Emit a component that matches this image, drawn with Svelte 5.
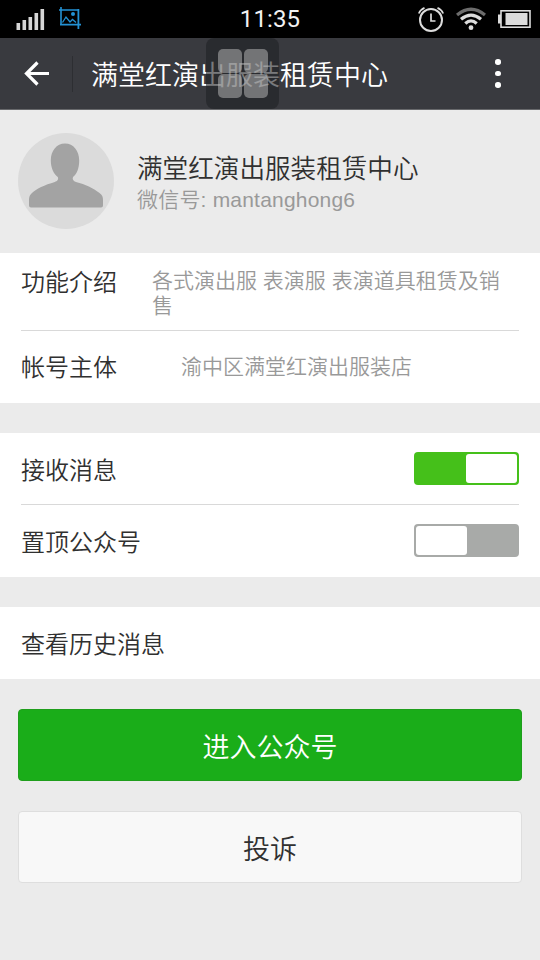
<script lang="ts">
    let receive = $state(true);
    let pinned = $state(false);

    const account = {
        name: '满堂红演出服装租赁中心',
        wechatId: 'mantanghong6',
        intro: '各式演出服 表演服 表演道具租赁及销售',
        owner: '渝中区满堂红演出服装店',
    };

    const BARS = [7, 10, 13, 17, 21];
</script>

<div class="screen">
    <div class="status">
        <div class="notices">
            <svg class="signal" width="30" height="24" viewBox="0 0 30 24">
                {#each BARS as h, i}
                    <rect x={0.5 + i * 6} y={22 - h} width="3.6" height={h} fill="#d6d6d6" />
                {/each}
            </svg>
            <svg class="shot" width="24" height="24" viewBox="0 0 24 24" fill="none" stroke="#2391d3" stroke-width="1.6">
                <path d="M3 1v18M1 4h20" />
                <path d="M2 18.700h21M20.400 3v20" stroke-width="1.800" />
                <path d="M4.500 16.500l3.500-5.500 4 5 2.500-2.500 3.500 3" stroke-width="1.300" />
                <circle cx="15" cy="8" r="2" fill="#2391d3" stroke="none" />
            </svg>
        </div>
        <span class="clock">11:35</span>
        <div class="tray">
            <svg width="26" height="26" viewBox="0 0 26 26" fill="none" stroke="#dcdcdc" stroke-width="2">
                <circle cx="13" cy="14" r="11" />
                <path d="M13 7.500V15h4.500" stroke-width="1.700" />
                <path d="M.8 7.500Q2.500 3.500 6.500 1.900M25.200 7.500Q23.500 3.500 19.500 1.900" stroke-width="1.700" />
            </svg>
            <svg width="30" height="24" viewBox="0 0 30 24" fill="none" stroke="#dcdcdc" stroke-width="3.300">
                <path d="M1 8Q15-3.500 29 8" stroke="#6c6c6c" />
                <path d="M5 12.200Q15 4 25 12.200" />
                <path d="M9.300 16.400Q15 11.400 20.700 16.400" />
                <circle cx="15" cy="20.700" r="2.400" fill="#dcdcdc" stroke="none" />
            </svg>
            <svg width="33" height="18" viewBox="0 0 33 18">
                <rect x="0" y="4.500" width="3" height="9" fill="#dcdcdc" />
                <rect x="3" y=".8" width="29" height="16.400" fill="none" stroke="#dcdcdc" stroke-width="1.600" />
                <rect x="7.500" y="3" width="22" height="12" fill="#dcdcdc" />
            </svg>
        </div>
    </div>

    <header class="bar">
        <button class="back" aria-label="返回">
            <svg width="26" height="26" viewBox="0 0 26 26" fill="none" stroke="#fff" stroke-width="3.200">
                <path d="M25 12.500H3M13.500 1.500l-11 11 11 11" />
            </svg>
        </button>
        <h1>{account.name}</h1>
        <button class="more" aria-label="更多"><i></i><i></i><i></i></button>
        <div class="float">
            <b></b><b></b><b></b><b></b>
        </div>
    </header>

    <section class="profile">
        <svg class="avatar" width="96" height="96" viewBox="0 0 96 96">
            <circle cx="48" cy="48" r="48" fill="#dbdbdb" />
            <path d="M47 10.500c-8.500 0-14.200 7.500-14.200 17 0 7.500 3 13.500 7 16.500 1 2.500-.5 4-3 5-10 3-18.500 6.500-23.800 12-2.200 2.200-2 5-2 8v3.500q0 2 2 2h70q2 0 2-2V67c0-3.500-.8-4.800-3.500-7-6.500-5-14-8.700-23.500-11-2.500-1-4-2.500-3-5 4-3 6.200-9 6.200-16.500 0-9.500-5.700-17-14.200-17z" fill="#a3a3a3" />
        </svg>
        <div>
            <div class="name">{account.name}</div>
            <div class="wxid">微信号: {account.wechatId}</div>
        </div>
    </section>

    <section class="group">
        <div class="row intro">
            <span class="label">功能介绍</span>
            <span class="value">{account.intro}</span>
        </div>
        <div class="row owner">
            <span class="label">帐号主体</span>
            <span class="value">{account.owner}</span>
        </div>
    </section>

    <section class="group settings">
        <div class="row">
            <span class="label">接收消息</span>
            <button class="switch" class:on={receive} aria-label="接收消息" onclick={() => (receive = !receive)}><i></i></button>
        </div>
        <div class="row">
            <span class="label">置顶公众号</span>
            <button class="switch" class:on={pinned} aria-label="置顶公众号" onclick={() => (pinned = !pinned)}><i></i></button>
        </div>
    </section>

    <section class="group">
        <div class="row">
            <span class="label">查看历史消息</span>
        </div>
    </section>

    <div class="actions">
        <button class="btn primary">进入公众号</button>
        <button class="btn">投诉</button>
    </div>
</div>

<style>
    :global(body) {
        margin: 0;
        background: #ebebeb;
    }

    .screen {
        width: 540px;
        height: 960px;
        overflow: hidden;
        background: #ebebeb;
        color: #303030;
        font-family: 'Liberation Sans', 'Noto Sans CJK SC', sans-serif;
        font-weight: 350;
    }

    .screen * {
        box-sizing: border-box;
    }

    button {
        padding: 0;
        border: 0;
        background: none;
        font: inherit;
        color: inherit;
    }

    svg {
        display: block;
        flex: none;
    }

    .status {
        display: grid;
        grid-template-columns: 1fr auto 1fr;
        align-items: center;
        height: 38px;
        background: #000;
    }

    .notices {
        display: flex;
        gap: 12px;
        padding-left: 16px;
    }

    .signal {
        margin-top: 1px;
    }

    .shot {
        margin-top: -1px;
    }

    .clock {
        color: #f2f2f2;
        font: 400 24px/38px Roboto, sans-serif;
        letter-spacing: 0.1px;
    }

    .tray {
        display: flex;
        align-items: center;
        justify-content: flex-end;
        gap: 12px;
        padding-right: 9px;
    }

    .bar {
        position: relative;
        display: flex;
        align-items: center;
        height: 72px;
        border-bottom: 1px solid #68696c;
        background: #393a3f;
        color: #fff;
    }

    .back {
        display: flex;
        align-items: center;
        width: 73px;
        height: 36px;
        padding-left: 24px;
        border-right: 1px solid #2d2e32;
    }

    h1 {
        flex: 1;
        margin: 0 0 0 18px;
        padding-top: 4px;
        font-size: 27px;
        font-weight: 350;
        line-height: 40px;
    }

    .more {
        display: flex;
        flex-direction: column;
        align-items: center;
        gap: 6px;
        width: 84px;
    }

    .more i {
        width: 5.5px;
        height: 5.5px;
        border-radius: 50%;
        background: #fff;
    }

    .float {
        position: absolute;
        top: 0;
        left: 206px;
        display: grid;
        grid-template-columns: 24px 24px;
        grid-template-rows: 24px 24px;
        place-content: center;
        gap: 1px 2px;
        width: 73px;
        height: 71px;
        border-radius: 8px;
        background: rgba(32, 33, 36, 0.6);
    }

    .float b {
        border-radius: 5px;
        background: rgba(190, 190, 190, 0.5);
    }

    .profile {
        display: flex;
        align-items: center;
        gap: 23px;
        height: 143px;
        padding-left: 18px;
    }

    .avatar {
        margin-bottom: 1px;
    }

    .name {
        margin-top: 3px;
        font-size: 25.6px;
        line-height: 34px;
    }

    .wxid {
        color: #999;
        font-size: 21px;
        line-height: 28px;
    }

    .wxid {
        letter-spacing: 0.2px;
    }

    .group {
        margin-bottom: 30px;
        background: #fff;
    }

    .row {
        display: flex;
        align-items: center;
        height: 72px;
        margin: 0 21px;
    }

    .row + .row {
        border-top: 1px solid #d9d9d9;
    }

    .label {
        padding-top: 3px;
        font-size: 24px;
        line-height: 34px;
    }

    .value {
        color: #999;
        font-size: 21px;
        line-height: 25px;
    }

    .intro {
        align-items: flex-start;
        height: 77px;
        padding-top: 10px;
    }

    .intro .value {
        width: 350px;
        margin: 5px 0 0 35px;
    }

    .owner {
        height: 73px;
    }

    .owner .label {
        padding-top: 1px;
    }

    .owner .value {
        margin: -2px 0 0 64px;
    }

    .settings .label {
        padding-top: 5px;
    }

    .settings .row:first-child {
        height: 71px;
    }

    .settings .row:last-child {
        height: 73px;
        padding-bottom: 1px;
    }

    .switch {
        display: flex;
        width: 105px;
        height: 33px;
        margin-left: auto;
        padding: 2px;
        border-radius: 4px;
        background: #a8aaa8;
    }

    .switch.on {
        justify-content: flex-end;
        background: #45c01a;
    }

    .switch i {
        width: 51px;
        border-radius: 3px;
        background: #fff;
    }

    .actions {
        display: flex;
        flex-direction: column;
        gap: 30px;
        padding: 0 18px;
    }

    .btn {
        height: 72px;
        padding-top: 1px;
        border: 1px solid #dedede;
        border-radius: 4px;
        background: #f8f8f8;
        font-size: 27px;
    }

    .primary {
        border-color: #1f9e1c;
        background: #1aad19;
        color: #fff;
    }
</style>
